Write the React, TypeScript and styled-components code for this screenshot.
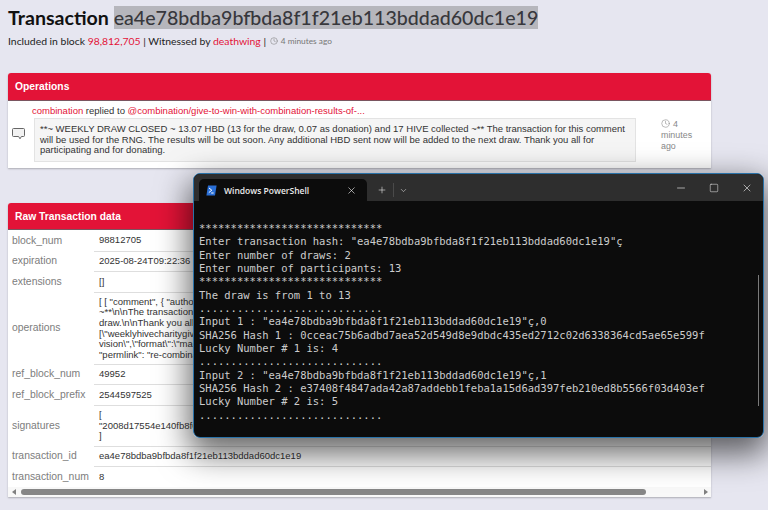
import React from "react";
import styled, { createGlobalStyle } from "styled-components";
import { Clock, X, Plus, ChevronDown, Minus, Square } from "lucide-react";

const Global = createGlobalStyle`
  html, body { margin: 0; padding: 0; }
  body { background: #e6e6f0; width: 768px; height: 510px; overflow: hidden; position: relative; }
`;

const Page = styled.div`
  display: flex;
  flex-direction: column;
  padding: 6px 57px 0 8px;
  font-family: Lato, "Liberation Sans", sans-serif;
  color: #222;
`;

const Title = styled.h1`
  margin: 0;
  font-size: 19.6px;
  line-height: 24px;
  font-weight: 700;
  color: #111;
  white-space: nowrap;
`;

const Hash = styled.span`
  background: #b6b6bc;
  color: #38383c;
  font-weight: 500;
`;

const Meta = styled.div`
  display: flex;
  align-items: center;
  margin-top: 4px;
  height: 14px;
  font-size: 10.4px;
  color: #222;
  white-space: pre;
`;

const Link = styled.a`
  color: #e31337;
`;

const Ago = styled.span`
  display: inline-flex;
  align-items: center;
  gap: 3px;
  font-size: 8.3px;
  color: #777;
  margin-left: 1px;
`;

const Panel = styled.section<{ $top: number }>`
  margin-top: ${(p) => p.$top}px;
  background: #fff;
  border-radius: 3px 3px 0 0;
  box-shadow: 0 1px 2px rgba(0, 0, 0, 0.25);
  overflow: hidden;
  font-family: "Liberation Sans", Arial, sans-serif;
`;

const PanelHead = styled.h2<{ $height: number }>`
  margin: 0;
  display: flex;
  align-items: center;
  height: ${(p) => p.$height}px;
  padding-left: 7px;
  background: #e31337;
  border-bottom: 1px solid #7a5560;
  color: #fff;
  font-size: 10.3px;
  font-weight: 700;
  box-sizing: border-box;
`;

const OpBody = styled.div`
  display: grid;
  grid-template-columns: 24px 1fr 62px;
  height: 67px;
  padding-left: 4px;
  font-size: 9.5px;
  line-height: 10.6px;
  color: #333;
`;

const OpIcon = styled.div`
  display: flex;
  align-items: flex-start;
  padding-top: 26px;
`;

const OpMain = styled.div`
  display: flex;
  flex-direction: column;
  margin-left: -4px;
  padding-top: 5px;
  width: 604px;
`;

const OpLine = styled.div`
  white-space: nowrap;
  height: 11px;
  margin-bottom: 1px;
`;

const Quote = styled.blockquote`
  margin: 0 0 0 2px;
  height: 44px;
  width: 602px;
  box-sizing: border-box;
  padding: 5px 5px;
  background: #f5f5f5;
  border: 1px solid #e3e3e3;
  white-space: pre;
`;

const OpTime = styled.div`
  padding: 18px 0 0 0;
  margin-left: 12px;
  color: #888;
  font-size: 8.9px;
  line-height: 10.8px;
`;

const OpClock = styled(Clock)`
  vertical-align: -1px;
  margin-right: 3px;
`;

const Table = styled.table`
  width: 100%;
  border-collapse: collapse;
  table-layout: fixed;
  font-size: 9.5px;
  line-height: 10.6px;
`;

const Key = styled.th`
  width: 82px;
  padding: 1px 0 0 4px;
  text-align: left;
  vertical-align: middle;
  font-weight: 400;
  font-size: 10.4px;
  color: #7d7d7d;
  white-space: nowrap;
`;

const Val = styled.td<{ $first?: boolean; $h: number }>`
  height: ${(p) => p.$h}px;
  padding: 1px 0 0 5px;
  box-sizing: border-box;
  border-top: ${(p) => (p.$first ? "none" : "1px solid #dedede")};
  color: #333;
  white-space: pre;
  overflow: hidden;
`;

const Bar = styled.div`
  display: flex;
  align-items: center;
  height: 10px;
  background: #f8f8f8;
  padding: 0 3px 0 4px;
`;

const BarArrow = styled.span<{ $dir: "l" | "r" }>`
  width: 0;
  height: 0;
  border-top: 3px solid transparent;
  border-bottom: 3px solid transparent;
  ${(p) => (p.$dir === "l" ? "border-right: 4px solid #808080;" : "border-left: 4px solid #808080;")}
`;

const BarThumb = styled.span`
  width: 625px;
  height: 6px;
  margin: 0 auto 0 5px;
  border-radius: 4px;
  background: #868686;
`;

const Terminal = styled.div`
  position: absolute;
  left: 193px;
  top: 173px;
  width: 571px;
  height: 265px;
  box-sizing: border-box;
  display: flex;
  flex-direction: column;
  background: #0c0c0c;
  border: 1px solid #2a72a8;
  border-radius: 7px;
  overflow: hidden;
`;

const TerminalShadow = styled.div`
  position: absolute;
  left: 193px;
  top: 173px;
  width: 571px;
  height: 265px;
  border-radius: 7px;
  box-shadow: 0 12px 32px 4px rgba(0, 0, 0, 0.6);
`;

const TitleBar = styled.div`
  display: flex;
  align-items: flex-end;
  height: 27px;
  flex: none;
  background: #2e2e2e;
  padding-left: 5px;
  color: #eaeaea;
`;

const Tab = styled.div`
  display: flex;
  align-items: center;
  width: 168px;
  height: 22px;
  box-sizing: border-box;
  padding: 0 10px 0 7px;
  background: #0c0c0c;
  border-radius: 5px 5px 0 0;
  font-family: "Open Sans", "Noto Sans", sans-serif;
  font-size: 8.5px;
  font-weight: 600;
  white-space: nowrap;
`;

const TabName = styled.span`
  margin-left: 7px;
  flex: 1;
`;

const TabTools = styled.div`
  display: flex;
  align-items: center;
  height: 22px;
  padding-left: 10px;
`;

const Divider = styled.span`
  width: 1px;
  height: 14px;
  background: #4a4a4a;
  margin: 0 5px 0 6px;
`;

const WinControls = styled.div`
  display: flex;
  align-items: center;
  margin-left: auto;
  align-self: center;
  gap: 22px;
  padding-right: 10px;
`;

const Screen = styled.pre`
  position: relative;
  margin: 0;
  flex: 1;
  padding: 21px 0 0 5px;
  font-family: "DejaVu Sans Mono", "Liberation Mono", monospace;
  font-size: 10.5px;
  line-height: 13.33px;
  color: #cccccc;
`;

const ScrollLine = styled.span`
  position: absolute;
  right: 4px;
  top: 74px;
  width: 1px;
  height: 131px;
  background: #7a7a7a;
`;

const rows: { k: string; v: string; h: number }[] = [
  { k: "block_num", v: "98812705", h: 21 },
  { k: "expiration", v: "2025-08-24T09:22:36", h: 20 },
  { k: "extensions", v: "[]", h: 21 },
  {
    k: "operations",
    v: `[ [ "comment", { "author": "combination", "body": "**~ WEEKLY DRAW CLOSED ~ 13.07 HBD
~**\\n\\nThe transaction for this comment will be used for the RNG.
draw.\\n\\nThank you all for participating
[\\"weeklyhivecharitygiveaway\\"]
vision\\",\\"format\\":\\"markdown\\"}",
"permlink": "re-combination-give-to-win" } ] ]`,
    h: 72,
  },
  { k: "ref_block_num", v: "49952", h: 20 },
  { k: "ref_block_prefix", v: "2544597525", h: 21 },
  {
    k: "signatures",
    v: `[
"2008d17554e140fb8f0c3a91b6e2d47f5a"
]`,
    h: 41,
  },
  { k: "transaction_id", v: "ea4e78bdba9bfbda8f1f21eb113bddad60dc1e19", h: 20 },
  { k: "transaction_num", v: "8", h: 21 },
];

const shell = `*****************************
Enter transaction hash: "ea4e78bdba9bfbda8f1f21eb113bddad60dc1e19"ç
Enter number of draws: 2
Enter number of participants: 13
*****************************
The draw is from 1 to 13
.............................
Input 1 : "ea4e78bdba9bfbda8f1f21eb113bddad60dc1e19"ç,0
SHA256 Hash 1 : 0cceac75b6adbd7aea52d549d8e9dbdc435ed2712c02d6338364cd5ae65e599f
Lucky Number # 1 is: 4
.............................
Input 2 : "ea4e78bdba9bfbda8f1f21eb113bddad60dc1e19"ç,1
SHA256 Hash 2 : e37408f4847ada42a87addebb1feba1a15d6ad397feb210ed8b5566f03d403ef
Lucky Number # 2 is: 5
.............................`;

const CommentIcon = () => (
  <svg width="13" height="13" viewBox="0 0 13 13" aria-hidden="true">
    <path
      d="M1.5 1.5h10a1 1 0 0 1 1 1v6a1 1 0 0 1-1 1H9.4L8 11.8 6.6 9.5H1.5a1 1 0 0 1-1-1v-6a1 1 0 0 1 1-1z"
      fill="#f2f2f2"
      stroke="#666"
      strokeWidth="1"
    />
  </svg>
);

const PsIcon = () => (
  <svg width="11" height="11" viewBox="0 0 11 11" aria-hidden="true">
    <path d="M2 .5h8.6L9 10.5H.4z" fill="#2a6fd6" />
    <path d="M3 3l2.8 2.2L2.8 7.6" fill="none" stroke="#fff" strokeWidth="1" />
    <path d="M5.2 8h2.4" stroke="#fff" strokeWidth="1" />
  </svg>
);

export default function App() {
  return (
    <>
      <Global />
      <Page>
        <Title>
          Transaction <Hash>ea4e78bdba9bfbda8f1f21eb113bddad60dc1e19</Hash>
        </Title>
        <Meta>
          Included in block <Link>98,812,705</Link> | Witnessed by <Link>deathwing</Link> |{" "}
          <Ago>
            <Clock size={8} strokeWidth={1.5} />4 minutes ago
          </Ago>
        </Meta>
        <Panel $top={25}>
          <PanelHead $height={28}>Operations</PanelHead>
          <OpBody>
            <OpIcon>
              <CommentIcon />
            </OpIcon>
            <OpMain>
              <OpLine>
                <Link>combination</Link> replied to{" "}
                <Link>@combination/give-to-win-with-combination-results-of-...</Link>
              </OpLine>
              <Quote>{`**~ WEEKLY DRAW CLOSED ~ 13.07 HBD (13 for the draw, 0.07 as donation) and 17 HIVE collected ~** The transaction for this comment
will be used for the RNG. The results will be out soon. Any additional HBD sent now will be added to the next draw. Thank you all for
participating and for donating.`}</Quote>
            </OpMain>
            <OpTime>
              <OpClock size={9} strokeWidth={1.5} />4
              <br />
              minutes
              <br />
              ago
            </OpTime>
          </OpBody>
        </Panel>
        <Panel $top={35}>
          <PanelHead $height={27}>Raw Transaction data</PanelHead>
          <Table>
            <tbody>
              {rows.map((r, i) => (
                <tr key={r.k}>
                  <Key>{r.k}</Key>
                  <Val $first={i === 0} $h={r.h}>
                    {r.v}
                  </Val>
                </tr>
              ))}
            </tbody>
          </Table>
          <Bar>
            <BarArrow $dir="l" />
            <BarThumb />
            <BarArrow $dir="r" />
          </Bar>
        </Panel>
      </Page>
      <TerminalShadow />
      <Terminal>
        <TitleBar>
          <Tab>
            <PsIcon />
            <TabName>Windows PowerShell</TabName>
            <X size={11} strokeWidth={1.4} />
          </Tab>
          <TabTools>
            <Plus size={10} strokeWidth={1.4} />
            <Divider />
            <ChevronDown size={9} strokeWidth={1.4} />
          </TabTools>
          <WinControls>
            <Minus size={12} strokeWidth={1.3} />
            <Square size={10} strokeWidth={1.3} />
            <X size={12} strokeWidth={1.3} />
          </WinControls>
        </TitleBar>
        <Screen>
          {shell}
          <ScrollLine />
        </Screen>
      </Terminal>
    </>
  );
}
